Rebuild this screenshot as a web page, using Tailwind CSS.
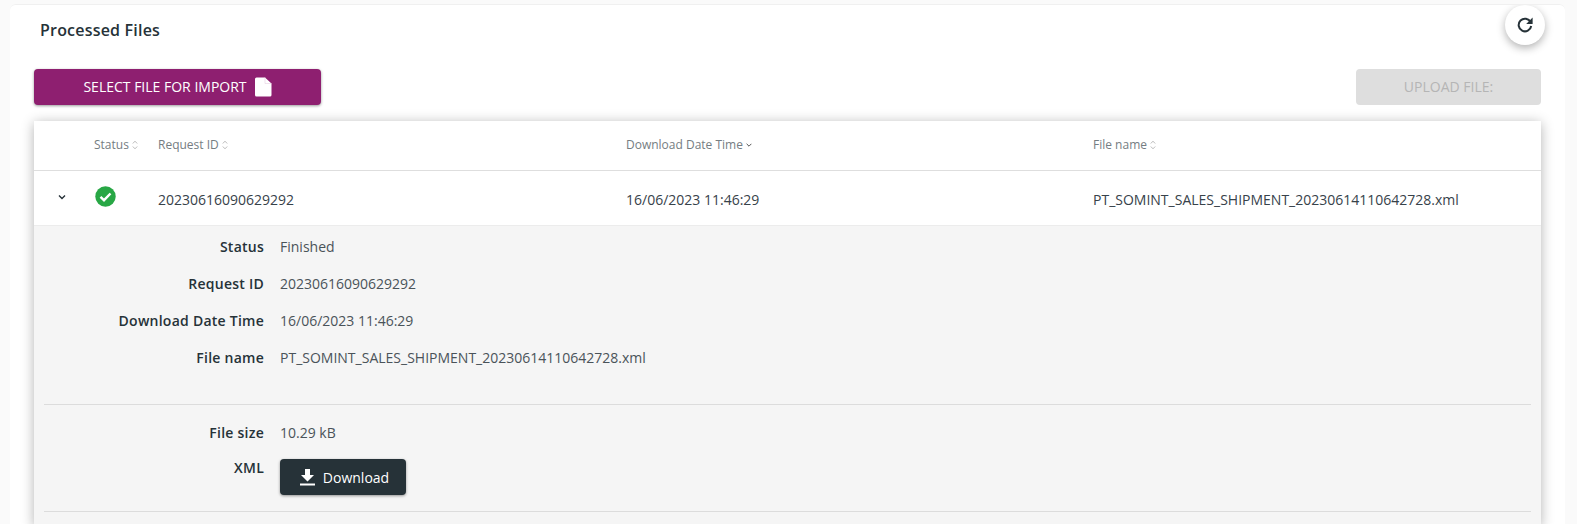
<!DOCTYPE html>
<html lang="en">
<head>
    <meta charset="UTF-8">
    <title>Processed Files</title>
    <script src="https://cdn.jsdelivr.net/npm/@tailwindcss/browser@4"></script>
</head>
<body class="h-[524px] overflow-hidden bg-[#fafafa] font-['Open_Sans',sans-serif]">
    <div class="ml-[10px] mr-[12px] mt-[4px] h-[520px] overflow-hidden rounded-t-md border-t border-[#f0f0f0] bg-white">
        <!-- title -->
        <div class="flex h-[49px] items-start justify-between pl-[30px] pr-[20px]">
            <h1 class="pt-[14px] text-[16px] leading-[22px] font-semibold tracking-[0.2px] text-[#263238]">Processed Files</h1>
            <button class="flex h-10 w-10 items-center justify-center rounded-full bg-white shadow-[0_3px_8px_rgba(0,0,0,0.3)]">
                <svg class="h-[18px] w-[18px]" viewBox="0 0 18 18" fill="none">
                    <path d="M14.6 6.2A6.3 6.3 0 1 0 15.2 10" stroke="#263238" stroke-width="2"/>
                    <path d="M16.6 1.6V8H10.2Z" fill="#263238"/>
                </svg>
            </button>
        </div>

        <!-- actions -->
        <div class="mt-[15px] flex justify-between px-[24px]">
            <button class="flex h-9 w-[287px] items-center justify-center gap-[7px] rounded bg-[#8e1f70] pb-[2px] text-[14px] font-medium text-white shadow-[0_1px_3px_rgba(0,0,0,0.4)]">
                SELECT FILE FOR IMPORT
                <svg class="mt-[2px] h-5 w-[18px]" viewBox="0 0 18 20">
                    <path d="M2.5 0.5H11L17.5 6.5V18A1.5 1.5 0 0 1 16 19.5H2.5A1.5 1.5 0 0 1 1 18V2A1.5 1.5 0 0 1 2.5 0.5Z" fill="#fff"/>
                    <path d="M11 0.5V6.5H17.5" fill="none" stroke="#e6cfe0" stroke-width="0.6"/>
                </svg>
            </button>
            <button class="h-9 w-[185px] rounded bg-[#dedede] pb-[1px] text-[14px] text-[#b5b5b5]">UPLOAD FILE:</button>
        </div>

        <!-- table -->
        <div class="mx-[24px] mt-[16px] bg-white shadow-[0_2px_12px_rgba(0,0,0,0.3)]">
            <div class="grid h-[50px] grid-cols-[59px_65px_468px_467px_1fr] items-center border-b border-[#dedede] pb-px text-[12px] text-[#757d82]">
                <div></div>
                <div class="flex items-center gap-[3px] pl-[1px]">Status
                    <svg class="h-[10px] w-[6px]" viewBox="0 0 6 10" fill="none" stroke="#aaa" stroke-width="0.8"><path d="M0.8 3.5 3 1.2 5.2 3.5M0.8 6.5 3 8.8 5.2 6.5"/></svg>
                </div>
                <div class="flex items-center gap-[3px]">Request ID
                    <svg class="h-[10px] w-[6px]" viewBox="0 0 6 10" fill="none" stroke="#aaa" stroke-width="0.8"><path d="M0.8 3.5 3 1.2 5.2 3.5M0.8 6.5 3 8.8 5.2 6.5"/></svg>
                </div>
                <div class="flex items-center gap-[3px]">Download Date Time
                    <svg class="h-[6px] w-[6px]" viewBox="0 0 6 6" fill="none" stroke="#555" stroke-width="1"><path d="M0.6 1.8 3 4.2 5.4 1.8"/></svg>
                </div>
                <div class="flex items-center gap-[3px]">File name
                    <svg class="h-[10px] w-[6px]" viewBox="0 0 6 10" fill="none" stroke="#aaa" stroke-width="0.8"><path d="M0.8 3.5 3 1.2 5.2 3.5M0.8 6.5 3 8.8 5.2 6.5"/></svg>
                </div>
            </div>

            <div class="grid h-[55px] grid-cols-[59px_65px_468px_467px_1fr] items-center border-b border-[#ececec] text-[14px] text-[#37424a]">
                <div class="flex justify-center pb-[3px] pr-[4px]">
                    <svg class="h-2 w-2" viewBox="0 0 8 8" fill="none" stroke="#263238" stroke-width="1.4"><path d="M1 2.5 4 5.5 7 2.5"/></svg>
                </div>
                <div class="pb-[3px] pl-[2px]">
                    <svg class="h-[21px] w-[21px]" viewBox="0 0 21 21">
                        <circle cx="10.5" cy="10.5" r="10.2" fill="#28a745"/>
                        <path d="M5.5 10.8 9 14.2 15.5 7.5" fill="none" stroke="#fff" stroke-width="2.4"/>
                    </svg>
                </div>
                <div class="pt-[3px]">20230616090629292</div>
                <div class="pt-[3px]">16/06/2023 11:46:29</div>
                <div class="pt-[3px]">PT_SOMINT_SALES_SHIPMENT_20230614110642728.xml</div>
            </div>

            <!-- expanded detail -->
            <div class="h-[300px] bg-[#f5f5f5] px-[10px] text-[14px] text-[#4a5359]">
                <div class="grid grid-cols-[220px_1fr] gap-x-[16px] gap-y-[19px] pt-[12px]">
                    <div class="text-right leading-[18px] font-semibold tracking-[0.25px] text-[#263238]">Status</div><div class="leading-[18px]">Finished</div>
                    <div class="text-right leading-[18px] font-semibold tracking-[0.25px] text-[#263238]">Request ID</div><div class="leading-[18px]">20230616090629292</div>
                    <div class="text-right leading-[18px] font-semibold tracking-[0.25px] text-[#263238]">Download Date Time</div><div class="leading-[18px]">16/06/2023 11:46:29</div>
                    <div class="text-right leading-[18px] font-semibold tracking-[0.25px] text-[#263238]">File name</div><div class="leading-[18px]">PT_SOMINT_SALES_SHIPMENT_20230614110642728.xml</div>
                </div>
                <div class="mt-[37px] border-t border-[#dcdcdc]"></div>
                <div class="grid grid-cols-[220px_1fr] gap-x-[16px] gap-y-[17px] pt-[19px]">
                    <div class="text-right leading-[18px] font-semibold tracking-[0.25px] text-[#263238]">File size</div><div class="leading-[18px]">10.29 kB</div>
                    <div class="text-right leading-[18px] font-semibold tracking-[0.25px] text-[#263238]">XML</div>
                    <div>
                        <button class="flex h-9 w-[126px] items-center justify-center gap-[8px] rounded bg-[#263238] pl-[3px] text-[14px] text-white shadow-[0_1px_3px_rgba(0,0,0,0.4)]">
                            <svg class="h-[17px] w-[15px]" viewBox="0 0 15 17" fill="#fff">
                                <path d="M5 0H10V6H14L7.5 12.5 1 6H5Z"/>
                                <rect x="0" y="14.5" width="15" height="2"/>
                            </svg>
                            Download
                        </button>
                    </div>
                </div>
                <div class="mt-[16px] border-t border-[#dcdcdc]"></div>
            </div>
        </div>
    </div>
</body>
</html>
